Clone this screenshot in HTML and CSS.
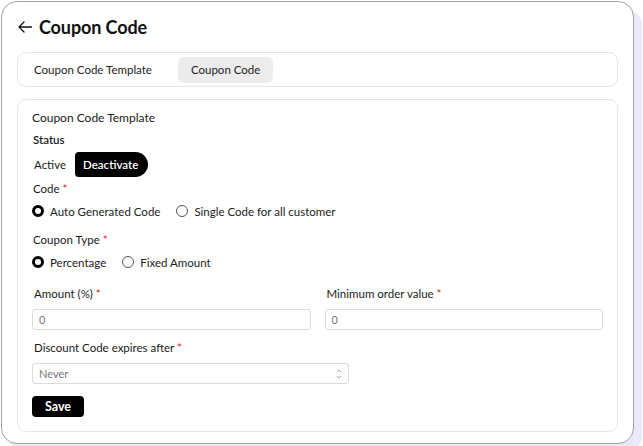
FILE: index.html
```html
<!DOCTYPE html>
<html>
<head>
<meta charset="utf-8">
<link rel="stylesheet" href="styles.css">
</head>
<body>
<div class="page">
  <div class="card">
    <div class="header">
      <svg class="back" width="14" height="12" viewBox="0 0 14 12"><path d="M6 1 L1 6 L6 11 M1 6 H13.5" fill="none" stroke="#111" stroke-width="1.3" stroke-linecap="round" stroke-linejoin="round"/></svg>
      <h1>Coupon Code</h1>
    </div>
    <div class="tabs">
      <div class="tab">Coupon Code Template</div>
      <div class="tab active">Coupon Code</div>
    </div>
    <div class="form">
      <div class="form-title">Coupon Code Template</div>
      <div class="label strong">Status</div>
      <div class="toggle">
        <span class="opt">Active</span>
        <span class="opt on">Deactivate</span>
      </div>
      <div class="label">Code <span class="req">*</span></div>
      <div class="radios">
        <label class="radio"><span class="dot checked"></span>Auto Generated Code</label>
        <label class="radio"><span class="dot"></span>Single Code for all customer</label>
      </div>
      <div class="label gap">Coupon Type <span class="req">*</span></div>
      <div class="radios">
        <label class="radio"><span class="dot checked"></span>Percentage</label>
        <label class="radio"><span class="dot"></span>Fixed Amount</label>
      </div>
      <div class="row">
        <div class="field">
          <div class="label">Amount (%) <span class="req">*</span></div>
          <div class="input">0</div>
        </div>
        <div class="field">
          <div class="label">Minimum order value <span class="req">*</span></div>
          <div class="input">0</div>
        </div>
      </div>
      <div class="field narrow">
        <div class="label">Discount Code expires after <span class="req">*</span></div>
        <div class="input select">Never
          <svg width="6" height="12" viewBox="0 0 6 12"><path d="M1 4 L3 2 L5 4 M1 8 L3 10 L5 8" fill="none" stroke="#999" stroke-width="0.9"/></svg>
        </div>
      </div>
      <button class="save">Save</button>
    </div>
  </div>
</div>
</body>
</html>
```
FILE: styles.css
```css
* { box-sizing: border-box; }
html, body { margin: 0; padding: 0; background: #fff; }
body { font-family: Lato, "Open Sans", sans-serif; color: #1a1a1a; }
.page { width: 643px; height: 446px; padding: 1px 9px 2px 1px; }
.card {
  height: 443px;
  border: 1px solid #a3a3a3;
  border-radius: 16px;
  background: #fff;
  box-shadow: 8px 8px 0 #ece8fb;
  padding: 0 15px 0 15px;
}
.header { display: flex; align-items: center; height: 50px; padding-left: 1px; }
.back { margin-right: 7px; }
h1 { font-size: 18px; font-weight: 700; margin: 0; color: #111; letter-spacing: -0.1px; }
.tabs {
  height: 35px;
  border: 1px solid #e6e6e6;
  border-radius: 9px;
  display: flex;
  align-items: center;
  gap: 26px;
  padding: 0 4px 0 16px;
}
.tab { font-size: 11.5px; color: #222; }
.tab.active { background: #ececec; border-radius: 6px; padding: 0 13px; height: 26px; line-height: 26px; }
.form {
  margin-top: 12px;
  height: 333px;
  border: 1px solid #e6e6e6;
  border-radius: 9px;
  padding: 10px 14px 0 14px;
}
.form-title { font-size: 12px; color: #1a1a1a; height: 16px; line-height: 16px; margin-bottom: 6px; }
.label { font-size: 11.5px; color: #1a1a1a; height: 16px; line-height: 16px; padding-left: 1px; }
.label.strong { font-weight: 600; }
.req { color: #e0201b; }
.toggle { display: flex; align-items: center; margin-top: 4px; height: 25px; margin-bottom: 4px; }
.opt { font-size: 11.5px; padding: 0 9px 0 2px; }
.opt.on {
  background: #000; color: #fff; font-weight: 600;
  height: 25px; line-height: 25px;
  padding: 0 10px 0 8px;
  border-radius: 4px 13px 13px 4px;
}
.radios { display: flex; gap: 16px; margin-top: 7px; height: 14px; align-items: center; }
.radio { display: flex; align-items: center; font-size: 11.5px; color: #222; }
.dot {
  width: 12px; height: 12px; border-radius: 50%;
  border: 1px solid #555; margin-right: 6px; background: #fff;
}
.dot.checked { border: 3.5px solid #000; }
.label.gap { margin-top: 14px; }
.row { display: flex; gap: 14px; margin-top: 17px; }
.row .field { flex: 1; }
.field { display: flex; flex-direction: column; }
.field .label { padding-left: 2px; }
.input {
  margin-top: 7px;
  height: 21px;
  border: 1px solid #dcdcdc;
  border-radius: 3px;
  font-size: 11px;
  color: #777;
  line-height: 19px;
  padding-left: 6px;
}
.narrow { width: 317px; margin-top: 10px; }
.narrow .input { margin-top: 7px; }
.select { display: flex; align-items: center; justify-content: space-between; padding-right: 6px; }
.save {
  margin-top: 12px;
  height: 21px;
  width: 52px;
  background: #000;
  color: #fff;
  border: none;
  border-radius: 4px;
  font-family: Lato, sans-serif;
  font-weight: 700;
  font-size: 12.5px;
  padding: 0;
}
```
